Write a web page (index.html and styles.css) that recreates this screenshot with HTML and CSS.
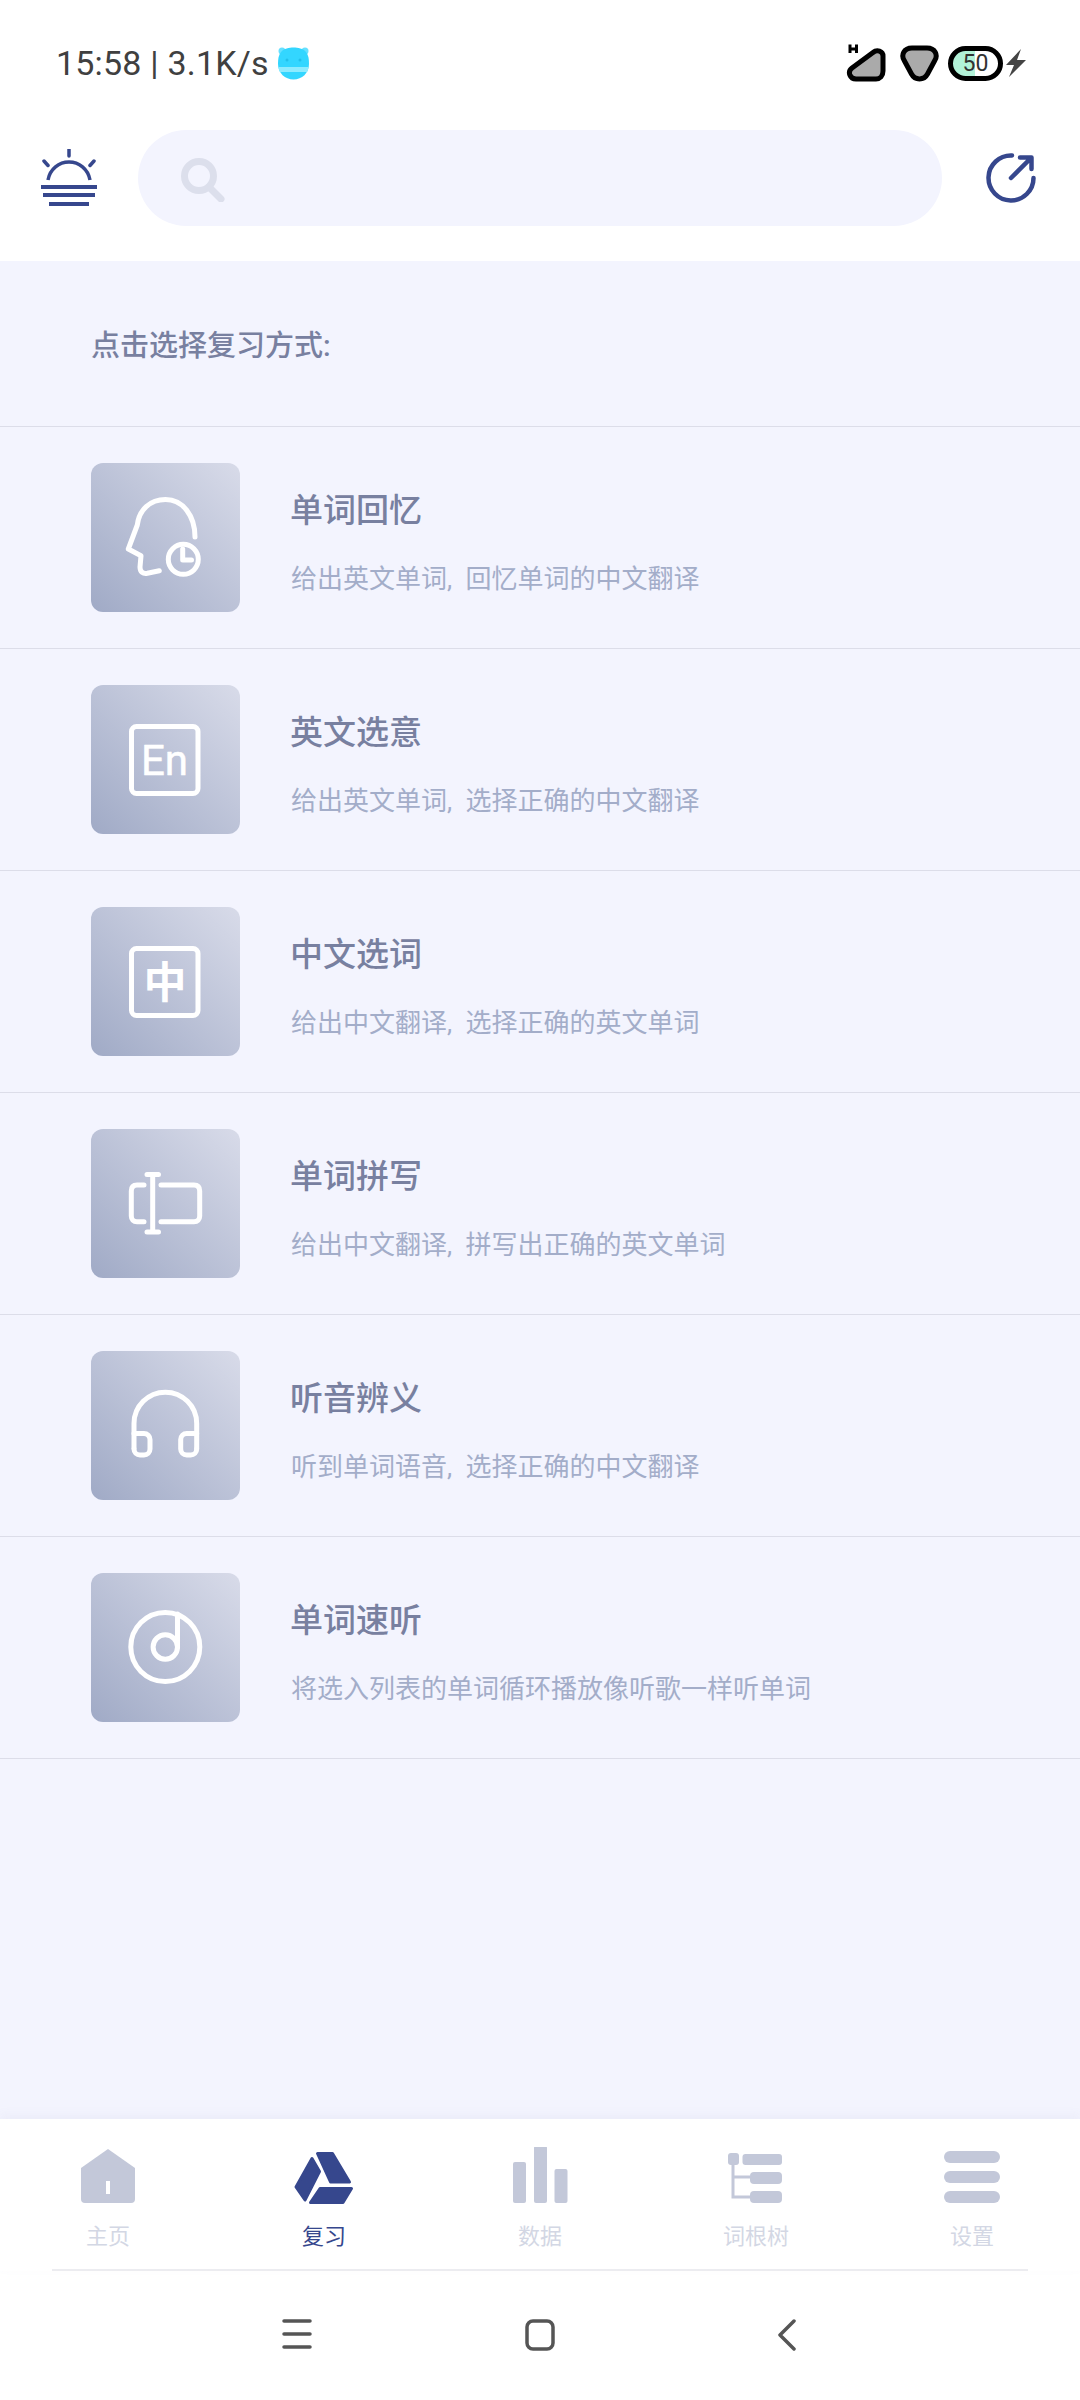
FILE: index.html
```html
<!DOCTYPE html>
<html lang="zh-CN">
<head>
  <meta charset="UTF-8">
  <title>复习</title>
  <link rel="stylesheet" href="styles.css">
</head>
<body>

  <header class="top">
    <div class="status">
      <div class="status-left">
        <span class="clock">15:58 | 3.1K/s</span>
        <svg class="bear" width="31" height="33" viewBox="0 0 31 33">
          <circle cx="4" cy="4" r="3.500" fill="#66e0ff"/>
          <circle cx="27" cy="4" r="3.500" fill="#66e0ff"/>
          <path d="M15.500 0.500C20 0.500 25 1.500 28 5C30.500 8 31 12 31 17C31 26 24 32.500 15.500 32.500C7 32.500 0 26 0 17C0 12 0.500 8 3 5C6 1.500 11 0.500 15.500 0.500Z" fill="#33d6ff"/>
          <path d="M0.300 20H30.700C30.400 21.800 29.900 23.400 29.200 25H1.800C1.100 23.400 0.600 21.800 0.300 20Z" fill="#8cebff"/>
          <circle cx="9" cy="13" r="1.500" fill="#22c0ea"/>
          <circle cx="22" cy="13" r="1.500" fill="#22c0ea"/>
        </svg>
      </div>
      <div class="status-right">
        <svg width="40" height="38" viewBox="0 0 40 38">
          <path d="M4 0.500V9M10.500 0.500V9M4 5H10.500" fill="none" stroke="#000" stroke-width="3"/>
          <path d="M27 8.500C31 5 37 7 37 12V27C37 32 34 35 30 35H10C4 35 1 28 6 24Z" fill="#aaa" stroke="#000" stroke-width="5" stroke-linejoin="round"/>
        </svg>
        <svg class="wifi" width="39" height="37" viewBox="0 0 39 37">
          <path d="M12 3H27C35 3 38.500 10 34.500 16L27.500 29C24 35.500 15 35.500 11.500 29L4.500 16C0.500 10 4 3 12 3Z" fill="#aaa" stroke="#000" stroke-width="5" stroke-linejoin="round"/>
        </svg>
        <div class="battery"><span class="battery-num">50</span></div>
        <svg class="bolt" width="20" height="28" viewBox="0 0 20 28">
          <path d="M15 0L0 16H8L3 28L20 11H11Z" fill="#444"/>
        </svg>
      </div>
    </div>

    <div class="toolbar">
      <svg width="56" height="58" viewBox="0 0 56 58" fill="none" stroke="#36478d" stroke-width="3.500">
        <path d="M28 0.500V7M3 12L7 16.500M53 12L49 16.500" stroke-linecap="round"/>
        <path d="M7 31C9 20 18 13 28 13C38 13 47 20 49 31"/>
        <path d="M0 38H56M2 46H54M8 55H48" stroke-width="4"/>
      </svg>
      <div class="search">
        <svg width="44" height="44" viewBox="0 0 44 44" fill="none" stroke="#dcdfec">
          <circle cx="18" cy="18" r="14.500" stroke-width="7"/>
          <path d="M29 30L40 41" stroke-width="7" stroke-linecap="round"/>
        </svg>
      </div>
      <svg width="50" height="50" viewBox="0 0 50 50" fill="none" stroke="#36478d" stroke-width="4.500" stroke-linecap="round" stroke-linejoin="round">
        <path d="M26 2.500A22.500 22.500 0 1 0 47.500 25"/>
        <path d="M25 25L45 5M34 4.500H45.500V16"/>
      </svg>
    </div>
  </header>

  <main class="content">
    <div class="hint">点击选择复习方式:</div>

    <div class="row">
      <div class="tile">
        <svg width="149" height="149" viewBox="0 0 149 149" fill="none" stroke="#fff" stroke-width="5" stroke-linecap="round" stroke-linejoin="round">
          <path d="M104 74C104 53 92 36.500 74.500 36.500C59 36.500 48 47 46.300 62L37.300 86L50 92.700L49 104C49 109 52 111 56.300 110.300L68.300 107.700"/>
          <circle cx="92.300" cy="96.300" r="15"/>
          <path d="M91.700 86V97H100.500"/>
        </svg>
      </div>
      <div class="row-text">
        <div class="row-title">单词回忆</div>
        <div class="row-desc">给出英文单词, 回忆单词的中文翻译</div>
      </div>
    </div>

    <div class="row">
      <div class="tile">
        <svg width="149" height="149" viewBox="0 0 149 149" fill="none" stroke="#fff" stroke-width="5" stroke-linejoin="round">
          <rect x="40.500" y="41.500" width="66.500" height="67" rx="5"/>
          <text class="tile-glyph" x="73.500" y="90" text-anchor="middle" font-size="42">En</text>
        </svg>
      </div>
      <div class="row-text">
        <div class="row-title">英文选意</div>
        <div class="row-desc">给出英文单词, 选择正确的中文翻译</div>
      </div>
    </div>

    <div class="row">
      <div class="tile">
        <svg width="149" height="149" viewBox="0 0 149 149" fill="none" stroke="#fff" stroke-width="5" stroke-linejoin="round">
          <rect x="40.500" y="41.500" width="66.500" height="67" rx="5"/>
          <text class="tile-glyph tile-glyph-cjk" x="74" y="91" text-anchor="middle" font-size="43">中</text>
        </svg>
      </div>
      <div class="row-text">
        <div class="row-title">中文选词</div>
        <div class="row-desc">给出中文翻译, 选择正确的英文单词</div>
      </div>
    </div>

    <div class="row">
      <div class="tile">
        <svg width="149" height="149" viewBox="0 0 149 149" fill="none" stroke="#fff" stroke-width="5" stroke-linecap="round" stroke-linejoin="round">
          <path d="M53 56H46C42.500 56 40.300 58 40.300 62V87C40.300 90.500 42.500 92.700 46 92.700H53"/>
          <path d="M70 56H103C106.500 56 108.700 58 108.700 62V87C108.700 90.500 106.500 92.700 103 92.700H70"/>
          <path d="M61.700 45.500V103M56 45.500H67.500M56 103H67.500"/>
        </svg>
      </div>
      <div class="row-text">
        <div class="row-title">单词拼写</div>
        <div class="row-desc">给出中文翻译, 拼写出正确的英文单词</div>
      </div>
    </div>

    <div class="row">
      <div class="tile">
        <svg width="149" height="149" viewBox="0 0 149 149" fill="none" stroke="#fff" stroke-width="5" stroke-linecap="round" stroke-linejoin="round">
          <path d="M43 97V72.500A31.350 31.350 0 0 1 105.700 72.500V97"/>
          <path d="M43 82.500H53A6 6 0 0 1 59 88.500V98A6 6 0 0 1 53 104H49A6 6 0 0 1 43 98"/>
          <path d="M105.700 82.500H95.700A6 6 0 0 0 89.700 88.500V98A6 6 0 0 0 95.700 104H99.700A6 6 0 0 0 105.700 98"/>
        </svg>
      </div>
      <div class="row-text">
        <div class="row-title">听音辨义</div>
        <div class="row-desc">听到单词语音, 选择正确的中文翻译</div>
      </div>
    </div>

    <div class="row">
      <div class="tile">
        <svg width="149" height="149" viewBox="0 0 149 149" fill="none" stroke="#fff" stroke-width="5" stroke-linecap="round">
          <circle cx="74.300" cy="74" r="34.500"/>
          <circle cx="74.300" cy="74" r="12.200"/>
          <path d="M86.500 74V41"/>
        </svg>
      </div>
      <div class="row-text">
        <div class="row-title">单词速听</div>
        <div class="row-desc">将选入列表的单词循环播放像听歌一样听单词</div>
      </div>
    </div>
  </main>

  <nav class="tabs">
    <div class="tab">
      <svg width="64" height="60" viewBox="0 0 64 60">
        <path d="M5 21L32 2L59 21V52A4 4 0 0 1 55 56H9A4 4 0 0 1 5 52Z" fill="#c3c8d9"/>
        <rect x="30" y="34" width="4" height="13" fill="#fff"/>
      </svg>
      <span>主页</span>
    </div>
    <div class="tab tab-active">
      <svg width="64" height="60" viewBox="0 0 64 60" fill="#36478d" stroke="#36478d" stroke-width="3" stroke-linejoin="round">
        <path d="M20 11.500L27.500 24.500L13 53L4 40Z"/>
        <path d="M25.500 6.500H40.500L57.500 35H38.500Z"/>
        <path d="M28 41.500H59.500L51 55.500H18.500Z"/>
      </svg>
      <span>复习</span>
    </div>
    <div class="tab">
      <svg width="64" height="60" viewBox="0 0 64 60" fill="#c3c8d9">
        <rect x="5" y="15" width="13" height="41" rx="2"/>
        <rect x="26" y="-1" width="13" height="57" rx="2"/>
        <rect x="46.500" y="22" width="13" height="34" rx="2"/>
      </svg>
      <span>数据</span>
    </div>
    <div class="tab">
      <svg width="64" height="60" viewBox="0 0 64 60" fill="#c3c8d9">
        <path d="M9 12V50H26M9 30H26" fill="none" stroke="#c3c8d9" stroke-width="3"/>
        <rect x="4" y="6" width="11" height="12" rx="3"/>
        <rect x="18.500" y="7" width="39.500" height="11" rx="3"/>
        <rect x="26" y="25" width="32" height="12" rx="4"/>
        <rect x="26" y="44" width="32" height="12" rx="4"/>
      </svg>
      <span>词根树</span>
    </div>
    <div class="tab">
      <svg width="64" height="60" viewBox="0 0 64 60" fill="#c3c8d9">
        <rect x="4" y="4" width="56" height="12" rx="6"/>
        <rect x="4" y="24" width="56" height="12" rx="6"/>
        <rect x="4" y="44" width="56" height="12" rx="6"/>
      </svg>
      <span>设置</span>
    </div>
  </nav>

  <div class="sysnav">
    <svg width="30" height="30" viewBox="0 0 30 30" stroke="#555" stroke-width="3.500" stroke-linecap="round">
      <path d="M2 2H28M2 15H28M2 28H28"/>
    </svg>
    <svg width="30" height="32" viewBox="0 0 30 32" fill="none" stroke="#555" stroke-width="3.500">
      <rect x="2" y="2" width="26" height="28" rx="6"/>
    </svg>
    <svg class="back" width="18" height="32" viewBox="0 0 18 32" fill="none" stroke="#555" stroke-width="3.500" stroke-linecap="round" stroke-linejoin="round">
      <path d="M16 2L2 16L16 30"/>
    </svg>
  </div>

</body>
</html>
```

FILE: styles.css
```css
* { box-sizing: border-box; }
html, body { margin: 0; padding: 0; }
body {
  width: 1080px;
  height: 2400px;
  display: flex;
  flex-direction: column;
  background: #fff;
  font-family: Roboto, "Noto Sans CJK SC", sans-serif;
}
svg { display: block; flex: none; }

.top { height: 261px; background: #fff; }
.status { height: 130px; padding: 0 54px 4px 56px; display: flex; align-items: center; justify-content: space-between; }
.status-left { display: flex; align-items: center; gap: 9px; }
.clock { font-size: 34px; color: #404040; line-height: 40px; letter-spacing: 0.2px; }
.status-right { display: flex; align-items: center; gap: 14px; }
.wifi { margin-right: -5px; }
.battery { width: 55px; height: 35px; border: 5px solid #000; border-radius: 18px; background: linear-gradient(to right, #b2f2d8 50%, #fff 50%); display: flex; align-items: center; justify-content: center; }
.bolt { margin-left: -11px; }
.battery-num { font-size: 23px; line-height: 25px; color: #333; }

.toolbar { height: 96px; padding-left: 41px; display: flex; align-items: center; }
.search { width: 804px; height: 96px; margin: 0 44px 0 41px; border-radius: 48px; background: #f3f4fe; padding: 4px 0 0 43px; display: flex; align-items: center; }

.content { flex: 1; background: #f3f4fe; }
.hint { height: 166px; padding: 0 0 2px 91px; display: flex; align-items: center; font-size: 29px; font-weight: 500; color: #7880a0; border-bottom: 1px solid #dcdde9; }

.row { height: 222px; padding: 36px 0 0 91px; display: flex; gap: 51px; border-bottom: 1px solid #dcdde9; }
.tile { width: 149px; height: 149px; border-radius: 12px; background: linear-gradient(45deg, #a0aac6, #d8dbe9); }
.tile-glyph { fill: #fff; stroke: #fff; stroke-width: 0.5px; font-family: Roboto, sans-serif; font-weight: 400; }
.tile-glyph-cjk { font-family: "Noto Sans CJK SC", sans-serif; font-weight: 700; stroke: none; }
.row-text { padding-top: 26px; }
.row-title { font-size: 33px; line-height: 44px; font-weight: 500; color: #7880a0; margin-left: -1px; }
.row-desc { font-size: 26px; line-height: 40px; margin-top: 26px; color: #a3adc9; word-spacing: 7px; }

.tabs { height: 152px; margin: 0; padding: 28px 52px 0; position: relative; display: flex; background: #fff; box-shadow: 0 -4px 10px rgba(120, 125, 170, 0.06); }
.tabs::after { content: ""; position: absolute; left: 52px; right: 52px; bottom: 0; height: 2px; background: #ececf0; }
.tab { width: 216px; flex: none; display: flex; flex-direction: column; align-items: center; gap: 15px; font-size: 22px; line-height: 30px; color: #d3d7e4; }
.tab:first-child { margin-left: -52px; }
.tab-active { color: #36478d; }

.sysnav { height: 129px; padding: 48px 0 0 282px; display: flex; align-items: flex-start; gap: 213px; background: #fff; }
.back { margin-left: 10px; }
```
